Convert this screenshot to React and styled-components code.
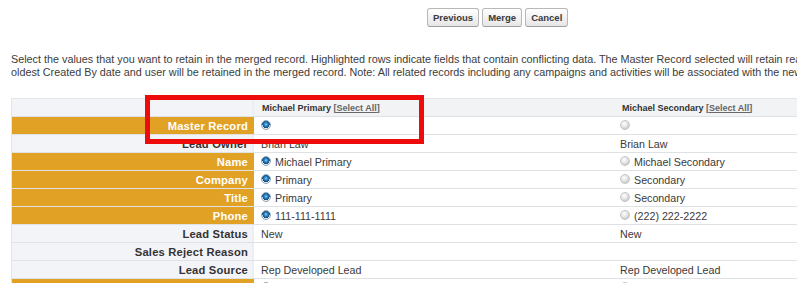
import styled, { createGlobalStyle } from "styled-components";

const GlobalStyle = createGlobalStyle`
	body {
		margin: 0;
		background: #ffffff;
		font-family: "Liberation Sans", Arial, sans-serif;
		color: #333333;
		overflow: hidden;
	}
`;

const Page = styled.div`
	position: relative;
	width: 1100px;
	padding: 8px 0 0 11px;
`;

const ButtonBar = styled.div`
	display: flex;
	gap: 3px;
	margin-left: 416px;
`;

const Btn = styled.button`
	height: 19px;
	padding: 0 ${(p) => p.$pad || 6}px;
	border: 1px solid #b8b8b8;
	border-bottom-color: #9e9e9e;
	border-radius: 3px;
	background: linear-gradient(#ffffff, #e6e6e6);
	font-family: "Liberation Sans", Arial, sans-serif;
	font-size: 9.5px;
	font-weight: bold;
	color: #3a3a3a;
	line-height: 17px;
`;

const Intro = styled.p`
	margin: 26px 0 0;
	font-size: 10.8px;
	line-height: 13px;
	color: #3c3c3c;
	white-space: nowrap;
`;

const Table = styled.div`
	margin-top: 19px;
	width: 1020px;
	border-top: 1px solid #e3e5e8;
	border-left: 1px solid #e3e5e8;
`;

const Row = styled.div`
	display: grid;
	grid-template-columns: 242px 360px 1fr;
	height: 18px;
	box-sizing: border-box;
	border-bottom: 1px solid #dfe2e5;
	background: ${(p) => (p.$head ? "#f2f3f4" : "#ffffff")};
`;

const Label = styled.div`
	display: flex;
	align-items: center;
	justify-content: flex-end;
	padding-right: 4px;
	font-size: 11.2px;
	letter-spacing: 0.2px;
	font-weight: bold;
	color: ${(p) => (p.$hl ? "#ffffff" : "#333333")};
	background: ${(p) => (p.$hl ? "#e1a125" : "#f3f4f7")};
	border-right: 2px solid ${(p) => (p.$hl ? "#e1a125" : "#eceef1")};
`;

const Cell = styled.div`
	display: flex;
	align-items: center;
	gap: 4px;
	padding-left: ${(p) => p.$pad}px;
	font-size: 10.7px;
	color: #3a3a3a;
	white-space: nowrap;
`;

const HeadCell = styled(Cell)`
	font-size: 9px;
	font-weight: bold;
	color: #333333;
`;

const SelectAll = styled.span`
	font-weight: bold;
	color: #666666;
	text-decoration: underline;
`;

const Radio = styled.span`
	flex: none;
	width: 10px;
	height: 10px;
	border-radius: 50%;
	box-sizing: border-box;
	margin-top: -2px;
	border: 1px solid ${(p) => (p.$on ? "#98a4b0" : "#c6c6c6")};
	background: ${(p) =>
		p.$on
			? "radial-gradient(circle at 50% 42%, #9ad6f7 0, #2f86c6 1.6px, #0c4c86 3.6px, #e8ecf0 3.7px)"
			: "radial-gradient(circle at 40% 35%, #ffffff 0, #e6e6e6 3px, #cdcdcd 5px)"};
`;

const Highlight = styled.div`
	position: absolute;
	left: 145px;
	top: 95px;
	width: 279px;
	height: 49px;
	box-sizing: border-box;
	border: 5px solid #ee0b0b;
	pointer-events: none;
`;

const rows = [
	{ label: "Master Record", hl: true, a: { radio: true, on: true, text: "" }, b: { radio: true, text: "" } },
	{ label: "Lead Owner", a: { text: "Brian Law" }, b: { text: "Brian Law" } },
	{ label: "Name", hl: true, a: { radio: true, on: true, text: "Michael Primary" }, b: { radio: true, text: "Michael Secondary" } },
	{ label: "Company", hl: true, a: { radio: true, on: true, text: "Primary" }, b: { radio: true, text: "Secondary" } },
	{ label: "Title", hl: true, a: { radio: true, on: true, text: "Primary" }, b: { radio: true, text: "Secondary" } },
	{ label: "Phone", hl: true, a: { radio: true, on: true, text: "111-111-1111" }, b: { radio: true, text: "(222) 222-2222" } },
	{ label: "Lead Status", a: { text: "New" }, b: { text: "New" } },
	{ label: "Sales Reject Reason", a: { text: "" }, b: { text: "" } },
	{ label: "Lead Source", a: { text: "Rep Developed Lead" }, b: { text: "Rep Developed Lead" } },
	{ label: "Email", hl: true, a: { radio: true, on: true, text: "" }, b: { radio: true, text: "" } },
];

function Value({ v, pad }) {
	return (
		<Cell $pad={pad}>
			{v.radio && <Radio $on={v.on} />}
			{v.text}
		</Cell>
	);
}

export default function App() {
	return (
		<>
			<GlobalStyle />
			<Page>
				<ButtonBar>
					<Btn $pad={5}>Previous</Btn>
					<Btn $pad={5}>Merge</Btn>
					<Btn $pad={5}>Cancel</Btn>
				</ButtonBar>

				<Intro>
					Select the values that you want to retain in the merged record. Highlighted rows indicate fields that contain conflicting data. The Master Record selected will retain read-only and hidden field values. The
					<br />
					oldest Created By date and user will be retained in the merged record. Note: All related records including any campaigns and activities will be associated with the new merged record.
				</Intro>

				<Table>
					<Row $head>
						<Label />
						<HeadCell $pad={8}>
							<span>
								Michael Primary <SelectAll>[Select All]</SelectAll>
							</span>
						</HeadCell>
						<HeadCell $pad={8}>
							<span>
								Michael Secondary <SelectAll>[Select All]</SelectAll>
							</span>
						</HeadCell>
					</Row>
					{rows.map((r) => (
						<Row key={r.label}>
							<Label $hl={r.hl}>{r.label}</Label>
							<Value v={r.a} pad={7} />
							<Value v={r.b} pad={6} />
						</Row>
					))}
				</Table>

				<Highlight />
			</Page>
		</>
	);
}
